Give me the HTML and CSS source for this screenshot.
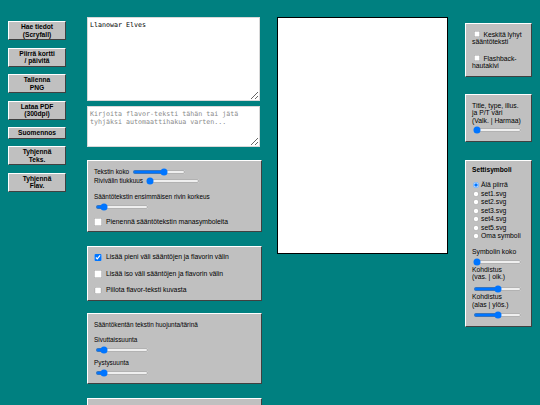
FILE: index.html
```html
<!DOCTYPE html>
<html lang="fi">

<head>
    <meta charset="UTF-8">
    <meta name="viewport" content="width=device-width, initial-scale=1.0">
    <title>Korttieditori</title>
    <link rel="stylesheet" href="styles.css">
</head>

<body>
    <div class="page">
        <!-- vasen nappirivi -->
        <div class="tools">
            <button class="tool-btn">Hae tiedot<br>(Scryfall)</button>
            <button class="tool-btn">Piirrä kortti<br>/ päivitä</button>
            <button class="tool-btn">Tallenna<br>PNG</button>
            <button class="tool-btn">Lataa PDF<br>(300dpi)</button>
            <button class="tool-btn">Suomennos</button>
            <button class="tool-btn">Tyhjennä<br>Teks.</button>
            <button class="tool-btn">Tyhjennä<br>Flav.</button>
        </div>

        <!-- tekstit ja säädöt -->
        <div class="editor">
            <textarea class="card-text">Llanowar Elves</textarea>
            <textarea class="flavor-text" placeholder="Kirjoita flavor-teksti tähän tai jätä tyhjäksi automaattihakua varten..."></textarea>

            <div class="panel text-panel">
                <div class="row">Tekstin koko <input type="range" class="slider" value="60"></div>
                <div class="row">Rivivälin tiukkuus <input type="range" class="slider" value="0"></div>
                <div class="label first">Sääntötekstin ensimmäisen rivin korkeus</div>
                <input type="range" class="slider block" value="10">
                <label class="check last"><input type="checkbox"> Pienennä sääntötekstin manasymboleita</label>
            </div>

            <div class="panel option-panel">
                <label class="check"><input type="checkbox" checked> Lisää pieni väli sääntöjen ja flavorin välin</label>
                <label class="check"><input type="checkbox"> Lisää iso väli sääntöjen ja flavorin välin</label>
                <label class="check"><input type="checkbox"> Piilota flavor-teksti kuvasta</label>
            </div>

            <div class="panel jitter-panel">
                <div class="label">Sääntökentän tekstin huojunta/tärinä</div>
                <div class="label spaced">Sivuttaissuunta</div>
                <input type="range" class="slider block" value="10">
                <div class="label after-slider">Pystysuunta</div>
                <input type="range" class="slider block" value="10">
            </div>

            <div class="panel empty-panel"></div>
        </div>

        <!-- korttikuva -->
        <div class="card-canvas"></div>

        <!-- oikea palsta -->
        <div class="side">
            <div class="panel side-panel layout-panel">
                <label class="side-check"><input type="checkbox"> Keskitä lyhyt sääntöteksti</label>
                <label class="side-check spaced"><input type="checkbox"> Flashback-hautakivi</label>
            </div>

            <div class="panel side-panel color-panel">
                <div>Title, type, illus.<br>ja P/T väri<br>(Valk. | Harmaa)</div>
                <input type="range" class="side-slider" value="0">
            </div>

            <div class="panel side-panel set-panel">
                <div class="set-title">Settisymboli</div>
                <div class="radios">
                    <label class="radio"><input type="radio" name="set" checked> Älä piirrä</label>
                    <label class="radio"><input type="radio" name="set"> set1.svg</label>
                    <label class="radio"><input type="radio" name="set"> set2.svg</label>
                    <label class="radio"><input type="radio" name="set"> set3.svg</label>
                    <label class="radio"><input type="radio" name="set"> set4.svg</label>
                    <label class="radio"><input type="radio" name="set"> set5.svg</label>
                    <label class="radio"><input type="radio" name="set"> Oma symboli</label>
                </div>
                <div class="size-label">Symbolin koko</div>
                <input type="range" class="side-slider" value="0">
                <div class="align-label">Kohdistus<br>(vas. | oik.)</div>
                <input type="range" class="side-slider gap" value="50">
                <div class="align-label wide">Kohdistus<br>(alas | ylös.)</div>
                <input type="range" class="side-slider small-gap" value="50">
            </div>
        </div>
    </div>
</body>

</html>
```

FILE: styles.css
```css
* {
    box-sizing: border-box;
}

body {
    margin: 0;
    background-color: #008080;
    font-family: "Liberation Sans", Arial, sans-serif;
    color: #000;
}

/* koko sivu on piirretty puolikokoon */
.page {
    zoom: 0.5;
    display: flex;
    align-items: flex-start;
    padding: 34px 0 0 16px;
}

.tools {
    width: 116px;
    margin-top: 8px;
    display: flex;
    flex-direction: column;
    gap: 15px;
}

.tool-btn {
    font-family: "Liberation Sans", Arial, sans-serif;
    font-size: 13.33px;
    font-weight: bold;
    line-height: 15px;
    padding: 2px 4px;
    color: #000;
    background-color: #c0c0c0;
    border: 2px solid;
    border-color: #fff #404040 #404040 #fff;
}

.editor {
    width: 350px;
    margin-left: 42px;
    display: flex;
    flex-direction: column;
}

textarea {
    width: 346px;
    margin: 0;
    padding: 5px 4px;
    border: 2px solid #d8d8d8;
    background-color: #fff;
    font-family: "DejaVu Sans Mono", monospace;
    font-size: 13.33px;
    color: #000;
}

textarea::placeholder {
    color: #8a8a8a;
}

.card-text {
    height: 168px;
}

.flavor-text {
    height: 82px;
    margin-top: 10px;
}

.panel {
    background-color: #c0c0c0;
    border: 2px solid;
    border-color: #fff #404040 #404040 #fff;
    font-size: 12.8px;
    line-height: 16px;
}

input[type="range"] {
    height: 16px;
}

.row {
    height: 18px;
    display: flex;
    align-items: center;
    gap: 4px;
}

.slider {
    width: 108px;
    margin: 2px;
}

.slider.block {
    display: block;
    margin: 4px 2px;
}

.check {
    height: 33px;
    display: flex;
    align-items: center;
    font-size: 13.6px;
}

.check input {
    width: 15px;
    height: 15px;
    margin: 0 9px 0 0;
}

.text-panel {
    margin-top: 26px;
    padding: 12px 12px 9px;
}

.text-panel .first {
    margin-top: 16px;
}

.text-panel .check {
    height: 18px;
    margin-top: 13px;
}

.option-panel {
    margin-top: 28px;
    padding: 4px 12px 3px;
}

.jitter-panel {
    margin-top: 24px;
    padding: 13px 12px 9px;
}

.label.spaced {
    margin-top: 14px;
}

.label.after-slider {
    margin-top: 10px;
}

.empty-panel {
    margin-top: 28px;
    height: 80px;
}

.card-canvas {
    width: 342px;
    height: 474px;
    margin-left: 30px;
    background-color: #fff;
    border: 2px solid #000;
}

.side {
    width: 134px;
    margin-left: 34px;
    margin-top: 12px;
}

.side-panel {
    padding-left: 12px;
    padding-right: 12px;
    font-size: 13.6px;
}

.side-check {
    display: block;
    line-height: 14px;
}

.side-check input {
    width: 12px;
    height: 12px;
    margin: 0 4px 0 3px;
    vertical-align: -1px;
}

.side-check.spaced {
    margin-top: 20px;
}

.layout-panel {
    padding-top: 13px;
    padding-bottom: 15px;
}

.color-panel {
    margin-top: 34px;
    padding-top: 13px;
    padding-bottom: 12px;
    line-height: 15px;
}

.side-slider {
    display: block;
    width: 98px;
    margin: 4px 2px 1px;
}

.color-panel .side-slider {
    margin-bottom: 2px;
}

.set-panel {
    margin-top: 36px;
    padding-top: 10px;
    padding-bottom: 13px;
}

.set-title {
    font-weight: bold;
    font-size: 13.33px;
}

.radios {
    margin-top: 14px;
}

.radio {
    height: 17px;
    display: flex;
    align-items: center;
}

.radio input {
    width: 12px;
    height: 12px;
    margin: 0 4px 0 2px;
}

.size-label {
    margin-top: 15px;
    line-height: 15px;
}

.align-label {
    line-height: 14px;
}

.align-label.wide {
    line-height: 15px;
}

.side-slider.gap {
    margin-top: 9px;
}

.side-slider.small-gap {
    margin-top: 6px;
}
```
